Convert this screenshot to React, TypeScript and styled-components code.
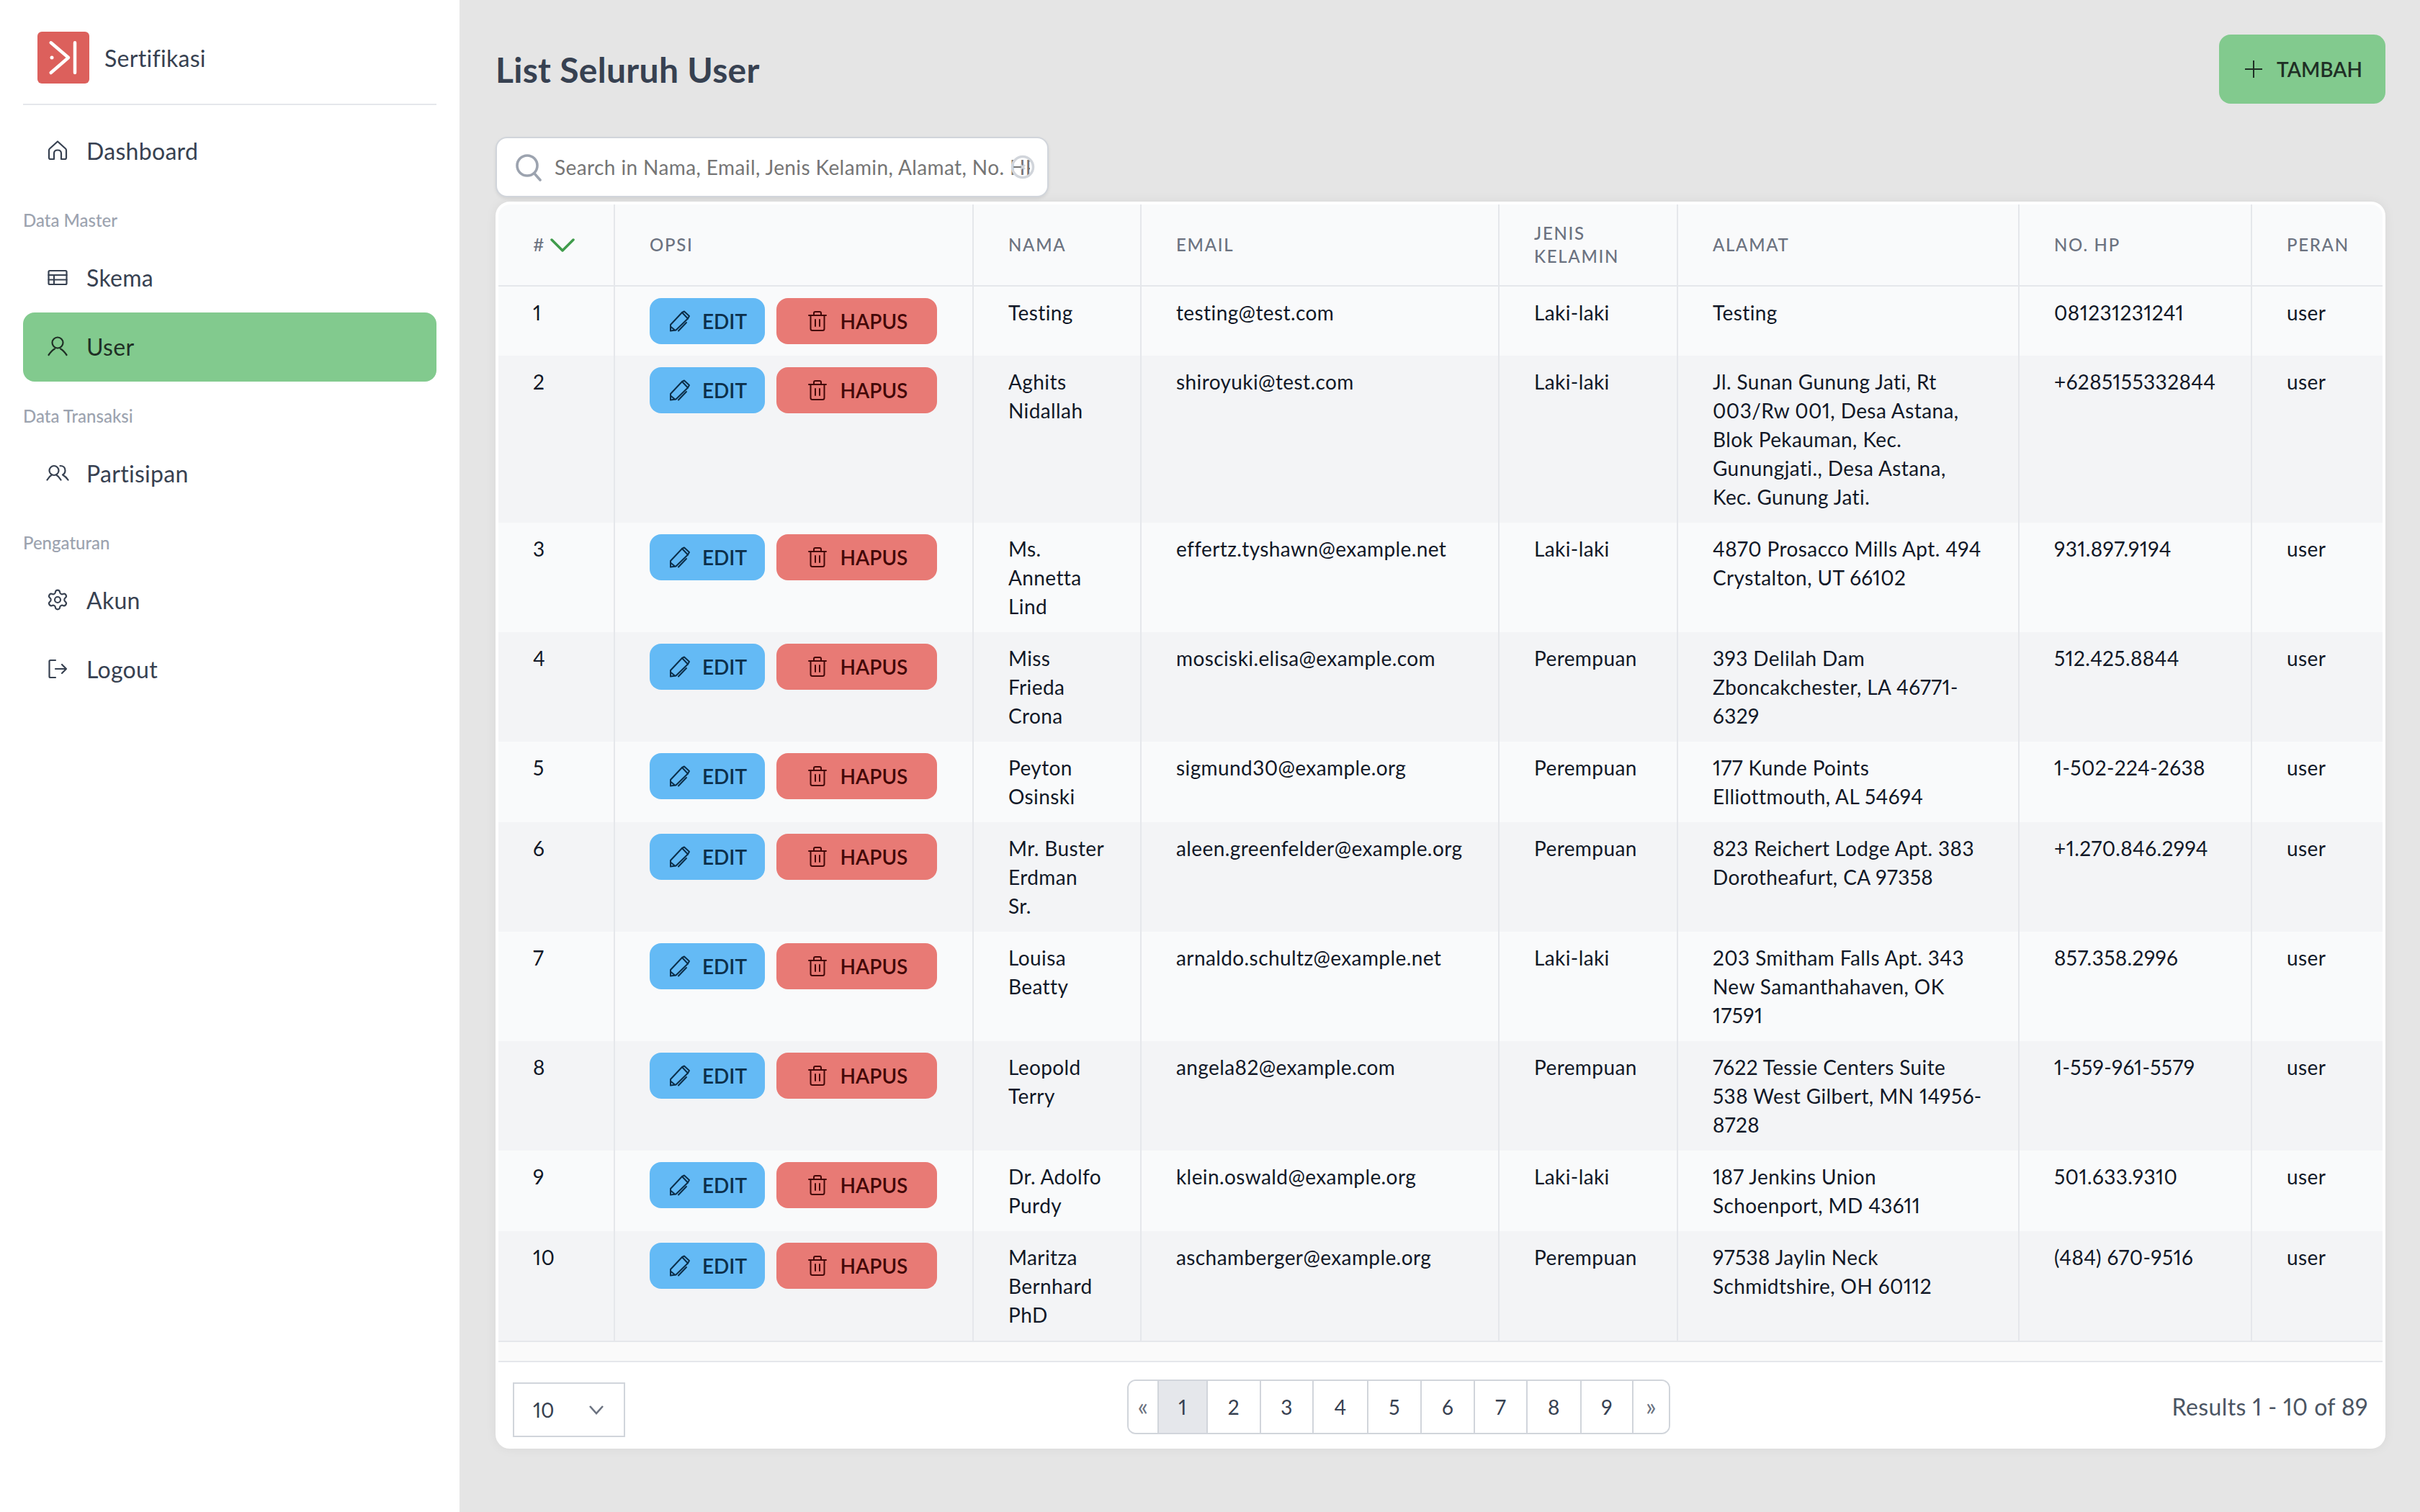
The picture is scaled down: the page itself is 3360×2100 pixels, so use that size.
import React, {FC, ReactNode} from 'react';
import styled, {createGlobalStyle} from "styled-components";
import {Settings} from "lucide-react";

const FONT = `Lato, "Noto Sans", sans-serif`;

interface IUser {
    id: number;
    name: string;
    email: string;
    gender: string;
    address: string;
    phone: string;
}

const users: IUser[] = [
    {id: 1, name: "Testing", email: "testing@test.com", gender: "Laki-laki", address: "Testing", phone: "081231231241"},
    {id: 2, name: "Aghits\nNidallah", email: "shiroyuki@test.com", gender: "Laki-laki", address: "Jl. Sunan Gunung Jati, Rt\n003/Rw 001, Desa Astana,\nBlok Pekauman, Kec.\nGunungjati., Desa Astana,\nKec. Gunung Jati.", phone: "+6285155332844"},
    {id: 3, name: "Ms.\nAnnetta\nLind", email: "effertz.tyshawn@example.net", gender: "Laki-laki", address: "4870 Prosacco Mills Apt. 494\nCrystalton, UT 66102", phone: "931.897.9194"},
    {id: 4, name: "Miss\nFrieda\nCrona", email: "mosciski.elisa@example.com", gender: "Perempuan", address: "393 Delilah Dam\nZboncakchester, LA 46771-\n6329", phone: "512.425.8844"},
    {id: 5, name: "Peyton\nOsinski", email: "sigmund30@example.org", gender: "Perempuan", address: "177 Kunde Points\nElliottmouth, AL 54694", phone: "1-502-224-2638"},
    {id: 6, name: "Mr. Buster\nErdman\nSr.", email: "aleen.greenfelder@example.org", gender: "Perempuan", address: "823 Reichert Lodge Apt. 383\nDorotheafurt, CA 97358", phone: "+1.270.846.2994"},
    {id: 7, name: "Louisa\nBeatty", email: "arnaldo.schultz@example.net", gender: "Laki-laki", address: "203 Smitham Falls Apt. 343\nNew Samanthahaven, OK\n17591", phone: "857.358.2996"},
    {id: 8, name: "Leopold\nTerry", email: "angela82@example.com", gender: "Perempuan", address: "7622 Tessie Centers Suite\n538 West Gilbert, MN 14956-\n8728", phone: "1-559-961-5579"},
    {id: 9, name: "Dr. Adolfo\nPurdy", email: "klein.oswald@example.org", gender: "Laki-laki", address: "187 Jenkins Union\nSchoenport, MD 43611", phone: "501.633.9310"},
    {id: 10, name: "Maritza\nBernhard\nPhD", email: "aschamberger@example.org", gender: "Perempuan", address: "97538 Jaylin Neck\nSchmidtshire, OH 60112", phone: "(484) 670-9516"},
];

const columns = [
    {label: "#", width: 162},
    {label: "Opsi", width: 498},
    {label: "Nama", width: 233},
    {label: "Email", width: 497},
    {label: "Jenis Kelamin", width: 248},
    {label: "Alamat", width: 474},
    {label: "No. HP", width: 323},
    {label: "Peran", width: 181},
];

const pages = [
    {n: 1, width: 68, active: true},
    {n: 2, width: 74},
    {n: 3, width: 73},
    {n: 4, width: 76},
    {n: 5, width: 74},
    {n: 6, width: 74},
    {n: 7, width: 73},
    {n: 8, width: 75},
    {n: 9, width: 72},
];

const Icon: FC<{children: ReactNode}> = ({children}) => (
    <NavSvg viewBox="0 0 32 32" fill="none" stroke="currentColor" strokeWidth={2.2} strokeLinecap="round" strokeLinejoin="round">
        {children}
    </NavSvg>
);

const HomeIcon = () => (
    <Icon><path d="M16 3.5 26.8 13.2Q28 14.3 28 15.8V26Q28 28 26 28H21V20Q21 15.5 16 15.5T11 20V28H6Q4 28 4 26V15.8Q4 14.3 5.200 13.200Z"/></Icon>
);
const TableIcon = () => (
    <Icon>
        <rect x="3.500" y="7" width="25" height="19" rx="1.500"/>
        <path d="M3.500 13H28.500M3.500 19.500H28.500M11 13V26"/>
    </Icon>
);
const UserIcon = () => (
    <Icon>
        <circle cx="16" cy="11" r="7.500"/>
        <path d="M3.500 28Q8 21.500 12 19.500M28.500 28Q24 21.500 20 19.500"/>
    </Icon>
);
const UsersIcon = () => (
    <Icon>
        <circle cx="11" cy="12.500" r="6.500"/>
        <path d="M1.500 25.500Q4.500 20.500 8 18.500M20.500 25.500Q17.500 20.500 14 18.500"/>
        <path d="M19.500 6Q26.500 6 26.500 12.500 26.500 16.500 23 18.500 27.500 21 30.500 25.500"/>
    </Icon>
);
const LogoutIcon = () => (
    <Icon>
        <path d="M13 4H6Q4.500 4 4.500 5.500V26.500Q4.500 28 6 28H13"/>
        <path d="M13 16H28M22 10 28 16 22 22"/>
    </Icon>
);

const PencilIcon = () => (
    <ButtonSvg viewBox="0 0 32 32" fill="none" stroke="currentColor" strokeWidth={2} strokeLinecap="round" strokeLinejoin="round">
        <path d="M4 21 20 4 23 2.500 30 9 28 12.500 11.500 28.500 4 29.500Z"/>
        <path d="M20 4 28 12.500M4 23.500 10 28.500M15 29.500 26 18"/>
    </ButtonSvg>
);
const TrashIcon = () => (
    <ButtonSvg viewBox="0 0 32 32" fill="none" stroke="currentColor" strokeWidth={2} strokeLinecap="round" strokeLinejoin="round">
        <path d="M4 8H28M11 8V5Q11 3 13 3H19Q21 3 21 5V8"/>
        <path d="M6.500 8V26.500Q6.500 29 9 29H23Q25.500 29 25.500 26.500V8"/>
        <path d="M13 14V23M19 14V23"/>
    </ButtonSvg>
);

const App: FC = () => {
    return (
        <Wrapper>
            <GlobalStyle/>
            <Sidebar>
                <Brand>
                    <svg width="72" height="72" viewBox="0 0 72 72">
                        <rect width="72" height="72" rx="6" fill="#dc605c"/>
                        <path d="M18.700 15.300 43 36 18.700 57M52 15.300V57" fill="none" stroke="#fff" strokeWidth="4.500" strokeLinecap="round" strokeLinejoin="round"/>
                        <circle cx="20" cy="36" r="2.500" fill="#fff"/>
                    </svg>
                    <BrandName>Sertifikasi</BrandName>
                </Brand>
                <Nav>
                    <NavItem><HomeIcon/>Dashboard</NavItem>
                    <NavLabel>Data Master</NavLabel>
                    <NavItem><TableIcon/>Skema</NavItem>
                    <NavItem $active><UserIcon/>User</NavItem>
                    <NavLabel>Data Transaksi</NavLabel>
                    <NavItem><UsersIcon/>Partisipan</NavItem>
                    <NavLabel>Pengaturan</NavLabel>
                    <NavItem><GearIcon size={32} strokeWidth={1.600}/>Akun</NavItem>
                    <NavItem><LogoutIcon/>Logout</NavItem>
                </Nav>
            </Sidebar>

            <Main>
                <Header>
                    <Title>List Seluruh User</Title>
                    <AddButton>
                        <ButtonSvg viewBox="0 0 32 32" fill="none" stroke="currentColor" strokeWidth={2}>
                            <path d="M16 4V28M4 16H28"/>
                        </ButtonSvg>
                        TAMBAH
                    </AddButton>
                </Header>

                <SearchBox>
                    <SearchSvg viewBox="0 0 40 40" fill="none" stroke="#9ca3af" strokeWidth={3.600} strokeLinecap="round">
                        <circle cx="18" cy="18" r="14"/>
                        <path d="M28 29 36 38"/>
                    </SearchSvg>
                    <SearchInput readOnly placeholder="Search in Nama, Email, Jenis Kelamin, Alamat, No. HP, Peran"/>
                    <ClearSvg viewBox="0 0 34 34" fill="none" stroke="#d1d5db">
                        <circle cx="17" cy="17" r="14.500" strokeWidth={3.500}/>
                        <path d="M14 14 20 20M20 14 14 20" strokeWidth={2.500}/>
                    </ClearSvg>
                </SearchBox>

                <Card>
                    <Table>
                        <colgroup>
                            {columns.map(col => <Col key={col.label} $width={col.width}/>)}
                        </colgroup>
                        <thead>
                        <tr>
                            {columns.map(col => (
                                <Th key={col.label}>
                                    {col.label === "#" ? (
                                        <SortLabel>
                                            #
                                            <svg width="36" height="20" viewBox="0 0 36 20" fill="none" stroke="#3f9b4b" strokeWidth={3.500} strokeLinecap="round" strokeLinejoin="round">
                                                <path d="M3 3 18 18 33 3"/>
                                            </svg>
                                        </SortLabel>
                                    ) : col.label}
                                </Th>
                            ))}
                        </tr>
                        </thead>
                        <tbody>
                        {users.map(user => (
                            <Row key={user.id} $even={user.id % 2 === 0}>
                                <Td>{user.id}</Td>
                                <Td>
                                    <Actions>
                                        <EditButton><PencilIcon/>EDIT</EditButton>
                                        <DeleteButton><TrashIcon/>HAPUS</DeleteButton>
                                    </Actions>
                                </Td>
                                <Td>{user.name}</Td>
                                <Td>{user.email}</Td>
                                <Td>{user.gender}</Td>
                                <Td>{user.address}</Td>
                                <Td>{user.phone}</Td>
                                <Td>user</Td>
                            </Row>
                        ))}
                        </tbody>
                    </Table>
                    <Band/>
                    <Footer>
                        <PerPage>
                            10
                            <svg width="24" height="16" viewBox="0 0 24 16" fill="none" stroke="#6b7280" strokeWidth={2.600}>
                                <path d="M3 3 12 13 21 3"/>
                            </svg>
                        </PerPage>
                        <Pagination>
                            <PageArrow $width={42}>«</PageArrow>
                            {pages.map(page => (
                                <PageCell key={page.n} $width={page.width} $active={page.active}>{page.n}</PageCell>
                            ))}
                            <PageArrow $width={49}>»</PageArrow>
                        </Pagination>
                        <Results>Results 1 - 10 of 89</Results>
                    </Footer>
                </Card>
            </Main>
        </Wrapper>
    );
};

const GlobalStyle = createGlobalStyle`
  * {
    box-sizing: border-box;
  }

  body {
    margin: 0;
    font-family: ${FONT};
    font-variant-numeric: proportional-nums;
    font-variant-ligatures: none;
    background: #e5e5e5;
  }

  button, input {
    font-variant-numeric: inherit;
    font-variant-ligatures: inherit;
  }
`

const Wrapper = styled.div`
  display: flex;
  width: 100%;
  min-height: 2100px;
`

const Sidebar = styled.aside`
  flex: 0 0 638px;
  background-color: #fff;
  padding: 0 32px;
`

const Brand = styled.div`
  display: flex;
  align-items: center;
  gap: 21px;
  padding: 44px 0 28px 20px;
  border-bottom: 2px solid #e5e7eb;
`

const BrandName = styled.span`
  font-size: 32px;
  letter-spacing: 0.3px;
  color: #374151;
`

const Nav = styled.nav`
  display: flex;
  flex-direction: column;
  padding-top: 16px;
`

const NavItem = styled.a<{$active?: boolean}>`
  display: flex;
  align-items: center;
  gap: 24px;
  height: 96px;
  padding: 0 32px 2px;
  border-radius: 16px;
  font-size: 32px;
  letter-spacing: 0.3px;
  color: ${p => p.$active ? "#1f2f25" : "#374151"};
  background-color: ${p => p.$active ? "#82ca8e" : "transparent"};
`

const NavLabel = styled.div`
  padding: 32px 0 16px;
  font-size: 24px;
  line-height: 32px;
  font-weight: 500;
  color: #9ca3af;
`

const NavSvg = styled.svg`
  flex: none;
  width: 32px;
  height: 32px;
`

const GearIcon = styled(Settings)`
  flex: none;
`

const Main = styled.main`
  flex: 1;
  padding: 48px 48px 0 50px;
`

const Header = styled.header`
  display: flex;
  align-items: center;
  justify-content: space-between;
  margin-bottom: 46px;
`

const Title = styled.h1`
  margin: 0;
  font-size: 48px;
  font-weight: 700;
  letter-spacing: 0.3px;
  color: #374151;
`

const ButtonSvg = styled.svg`
  flex: none;
  width: 32px;
  height: 32px;
`

const AddButton = styled.button`
  display: flex;
  align-items: center;
  justify-content: center;
  gap: 16px;
  width: 231px;
  height: 96px;
  border: none;
  border-radius: 16px;
  background-color: #82ca8e;
  color: #1f2f25;
  font: 600 28px ${FONT};
`

const SearchBox = styled.div`
  position: relative;
  display: flex;
  align-items: center;
  gap: 16px;
  width: 768px;
  height: 84px;
  padding: 0 24px;
  background-color: #fff;
  border: 2px solid #d1d5db;
  border-radius: 16px;
  box-shadow: 0 2px 4px rgba(0, 0, 0, 0.08);
`

const SearchSvg = styled.svg`
  flex: none;
  width: 40px;
  height: 40px;
`

const SearchInput = styled.input`
  flex: 1;
  min-width: 0;
  border: none;
  outline: none;
  padding: 0;
  font: 400 28px ${FONT};
  letter-spacing: 0.4px;

  ::placeholder {
    color: #6b7280;
    opacity: 1;
  }
`

const ClearSvg = styled.svg`
  position: absolute;
  right: 17px;
  top: 23px;
  width: 34px;
  height: 34px;
`

const Card = styled.section`
  margin-top: 6px;
  border: 4px solid #fff;
  border-radius: 20px;
  overflow: hidden;
  background-color: #fff;
  box-shadow: 0 0 16px rgba(0, 0, 0, 0.06);
`

const Table = styled.table`
  width: 2616px;
  table-layout: fixed;
  border-collapse: separate;
  border-spacing: 0;
`

const Col = styled.col<{$width: number}>`
  width: ${p => p.$width}px;
`

const Th = styled.th`
  height: 114px;
  padding: 0 48px;
  text-align: left;
  vertical-align: middle;
  font-size: 24px;
  line-height: 32px;
  font-weight: 500;
  letter-spacing: 1.7px;
  text-transform: uppercase;
  color: #6b7280;
  background-color: #f9fafb;
  border-bottom: 2px solid #e5e7eb;
  border-right: 2px solid #e5e7eb;

  &:last-child {
    border-right: none;
  }
`

const SortLabel = styled.span`
  display: inline-flex;
  align-items: center;
  gap: 6px;
`

const Row = styled.tr<{$even: boolean}>`
  background-color: ${p => p.$even ? "#f3f4f6" : "#f9fafb"};
`

const Td = styled.td`
  padding: 16px 48px;
  vertical-align: top;
  font-size: 28px;
  line-height: 40px;
  letter-spacing: 0.4px;
  color: #111827;
  white-space: pre-line;
  border-right: 2px solid #e5e7eb;

  &:last-child {
    border-right: none;
  }
`

const Actions = styled.div`
  display: flex;
  gap: 16px;
`

const ActionButton = styled.button`
  display: flex;
  align-items: center;
  justify-content: center;
  gap: 16px;
  height: 64px;
  border: none;
  border-radius: 16px;
  font: 600 28px ${FONT};
`

const EditButton = styled(ActionButton)`
  width: 160px;
  background-color: #64baf5;
  color: #0c2f4a;
`

const DeleteButton = styled(ActionButton)`
  width: 223px;
  background-color: #e87a75;
  color: #430808;
`

const Band = styled.div`
  height: 30px;
  background-color: #fafafa;
  border-top: 2px solid #e5e7eb;
  border-bottom: 2px solid #e5e7eb;
`

const Footer = styled.footer`
  display: flex;
  align-items: flex-start;
  justify-content: space-between;
  padding: 24px 20px 12px;
`

const PerPage = styled.div`
  display: flex;
  align-items: center;
  justify-content: space-between;
  width: 156px;
  height: 76px;
  margin-top: 4px;
  padding: 0 26px;
  border: 2px solid #d1d5db;
  font-size: 28px;
  color: #374151;
`

const Pagination = styled.nav`
  display: flex;
  height: 76px;
  border: 2px solid #d1d5db;
  border-radius: 12px;
  overflow: hidden;
`

const PageCell = styled.span<{$width: number; $active?: boolean}>`
  display: flex;
  align-items: center;
  justify-content: center;
  width: ${p => p.$width}px;
  border-right: 2px solid #d1d5db;
  font-size: 28px;
  color: #374151;
  background-color: ${p => p.$active ? "#e5e7eb" : "#fff"};
`

const PageArrow = styled(PageCell)`
  color: #6b7280;
  font-size: 34px;
  padding-bottom: 4px;

  &:last-child {
    border-right: none;
  }
`

const Results = styled.div`
  margin-top: 18px;
  font-size: 32px;
  line-height: 40px;
  letter-spacing: 0.4px;
  color: #4b5563;
`

export default App;
